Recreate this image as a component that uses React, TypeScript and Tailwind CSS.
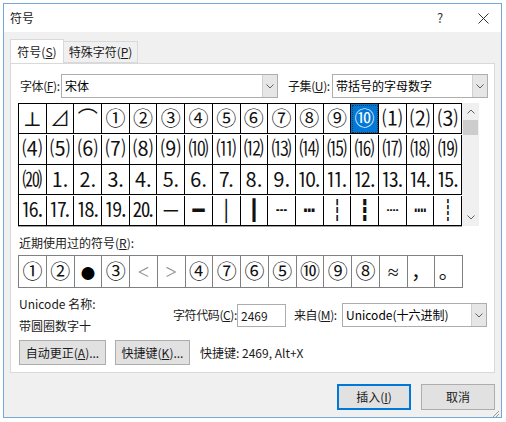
import React from 'react';

const rows = [
  ['⊥', '⊿', '⌒', '①', '②', '③', '④', '⑤', '⑥', '⑦', '⑧', '⑨', '⑩', '⑴', '⑵', '⑶'],
  ['⑷', '⑸', '⑹', '⑺', '⑻', '⑼', '⑽', '⑾', '⑿', '⒀', '⒁', '⒂', '⒃', '⒄', '⒅', '⒆'],
  ['⒇', '⒈', '⒉', '⒊', '⒋', '⒌', '⒍', '⒎', '⒏', '⒐', '⒑', '⒒', '⒓', '⒔', '⒕', '⒖'],
  ['⒗', '⒘', '⒙', '⒚', '⒛', '─', '━', '│', '┃', '┄', '┅', '┆', '┇', '┈', '┉', '┊'],
];

const recent = ['①', '②', '●', '③', '<', '>', '④', '⑦', '⑥', '⑤', '⑩', '⑨', '⑧', '≈', '，', '。'];

function Chevron({ up }: { up?: boolean }) {
  return (
    <svg width="8" height="5" viewBox="0 0 8 5" className="text-[#606060]">
      <polyline
        points={up ? '0.5,4.5 4,1 7.5,4.5' : '0.5,0.5 4,4 7.5,0.5'}
        fill="none"
        stroke="currentColor"
        strokeWidth="1"
      />
    </svg>
  );
}

function Select({ value, width }: { value: string; width: string }) {
  return (
    <div className={`flex h-[24px] shrink-0 items-stretch border border-[#adadad] bg-white ${width}`}>
      <span className="flex-1 pl-[3px] leading-[22px] text-[#000]">{value}</span>
      <span className="flex w-[15px] items-center justify-center border-l border-[#cfcfcf] bg-[#e6e6e6]">
        <Chevron />
      </span>
    </div>
  );
}

function Btn({ children, w }: { children: React.ReactNode; w: string }) {
  return (
    <div className={`flex h-[25px] shrink-0 items-center justify-center border border-[#adadad] bg-[#e1e1e1] ${w}`}>
      {children}
    </div>
  );
}

export default function App() {
  return (
    <div className="h-[422px] w-[506px] whitespace-nowrap bg-white pl-[3px] pt-[3px] font-['Noto_Sans_CJK_SC',sans-serif] text-[12px] text-[#1a1a1a]">
      <div className="flex h-[415px] w-[499px] flex-col border border-[#73a8d9] bg-[#f0f0f0]">
        {/* 标题栏 */}
        <div className="flex h-[28px] items-center bg-white pl-[6px]">
          <span className="flex-1">符号</span>
          <span className="w-[20px] text-[13px] text-[#333]">?</span>
          <span className="ml-[20px] mr-[12px] flex w-[12px] items-center justify-center">
            <svg width="11" height="11" viewBox="0 0 11 11">
              <path d="M0.5 0.5 L10.5 10.5 M10.5 0.5 L0.5 10.5" stroke="#333" strokeWidth="1" />
            </svg>
          </span>
        </div>

        {/* 标签页 */}
        <div className="ml-[6px] mt-[8px] flex h-[23px] items-end">
          <div className="relative z-10 flex h-[24px] w-[54px] items-center justify-center border border-b-0 border-[#d9d9d9] bg-white">
            符号(<u>S</u>)
          </div>
          <div className="flex h-[22px] w-[74px] items-center justify-center border border-l-0 border-[#d9d9d9] bg-[#f0f0f0]">
            特殊字符(<u>P</u>)
          </div>
        </div>

        <div className="mx-[6px] flex h-[310px] flex-col border border-[#d9d9d9] bg-white pl-[7px]">
          {/* 字体 / 子集 */}
          <div className="mt-[10px] flex items-center">
            <span className="ml-[2px] w-[41px] shrink-0 tracking-[-0.4px]">字体(<u>F</u>):</span>
            <Select value="宋体" width="w-[217px]" />
            <span className="ml-[10px] w-[44px] shrink-0 tracking-[-0.4px]">子集(<u>U</u>):</span>
            <Select value="带括号的字母数字" width="w-[156px]" />
          </div>

          {/* 符号网格 */}
          <div className="mt-[5px] flex h-[123px]">
            <div className="grid w-[444px] grid-cols-16 border-l border-t border-black font-['Liberation_Serif','DejaVu_Serif','Noto_Sans_CJK_SC',serif] shadow-[0_1px_0_#a0a0a0]">
              {rows.map((r, ri) =>
                r.map((c, ci) => {
                  const sel = ri === 0 && ci === 12;
                  return (
                    <div
                      key={`${ri}-${ci}`}
                      className={`flex h-[30px] items-center justify-center overflow-hidden border-b border-r border-black text-[20px] leading-none ${
                        sel ? 'bg-[#0078d7] text-white outline-1 outline-dotted outline-offset-[-2px] outline-[#333]' : 'text-[#111]'
                      }`}
                    >
                      {c}
                    </div>
                  );
                })
              )}
            </div>
            <div className="flex w-[17px] flex-col items-center bg-[#f0f0f0]">
              <div className="flex h-[17px] items-center">
                <Chevron up />
              </div>
              <div className="h-[15px] w-[15px] bg-[#cdcdcd]" />
              <div className="flex-1" />
              <div className="flex h-[17px] items-center">
                <Chevron />
              </div>
            </div>
          </div>

          {/* 近期使用过的符号 */}
          <div className="ml-[1px] mt-[8px] h-[18px] leading-[18px]">近期使用过的符号(<u>R</u>):</div>
          <div className="mt-[3px] grid h-[33px] w-[445px] grid-cols-16 border-l border-t border-[#808080] font-['Liberation_Serif','DejaVu_Serif','Noto_Sans_CJK_SC',serif]">
            {recent.map((c, i) => (
              <div
                key={i}
                className={`flex h-[32px] items-center justify-center border-b border-r border-[#808080] leading-none ${
                  c === '<' || c === '>' ? 'text-[20px] text-[#888]' : c === '●' ? 'text-[30px] text-black' : 'text-[20px] text-[#111]'
                }`}
              >
                {c}
              </div>
            ))}
          </div>

          {/* Unicode 名称 / 字符代码 */}
          <div className="mt-[7px] flex items-center">
            <div className="ml-[1px] flex w-[154px] shrink-0 flex-col gap-[4px]">
              <span className="leading-[18px]">Unicode 名称:</span>
              <span className="leading-[18px]">带圆圈数字十</span>
            </div>
            <span className="w-[64px] shrink-0 tracking-[-0.4px]">字符代码(<u>C</u>):</span>
            <div className="h-[23px] w-[49px] shrink-0 border border-[#adadad] pl-[3px] leading-[21px]">2469</div>
            <span className="ml-[8px] w-[48px] shrink-0 tracking-[-0.4px]">来自(<u>M</u>):</span>
            <Select value="Unicode(十六进制)" width="w-[145px]" />
          </div>

          {/* 按钮 */}
          <div className="mt-[5px] flex items-center">
            <Btn w="w-[87px] ml-[1px]">
              自动更正(<u>A</u>)...
            </Btn>
            <Btn w="w-[75px] ml-[9px]">
              快捷键(<u>K</u>)...
            </Btn>
            <span className="ml-[10px]">快捷键: 2469, Alt+X</span>
          </div>
        </div>

        {/* 底部按钮 */}
        <div className="relative mt-[11px] flex justify-end pr-[6px]">
          <div className="flex h-[26px] w-[74px] items-center justify-center border-2 border-[#0078d7] bg-[#e1e1e1]">
            插入(<u>I</u>)
          </div>
          <div className="ml-[10px] flex h-[26px] w-[74px] items-center justify-center border border-[#adadad] bg-[#e1e1e1]">
            取消
          </div>
          <svg width="10" height="10" viewBox="0 0 10 10" className="absolute bottom-[-8px] right-[1px]">
            <path d="M9 3 L3 9 M9 6 L6 9" stroke="#9a9a9a" strokeWidth="1" />
          </svg>
        </div>
      </div>
    </div>
  );
}
